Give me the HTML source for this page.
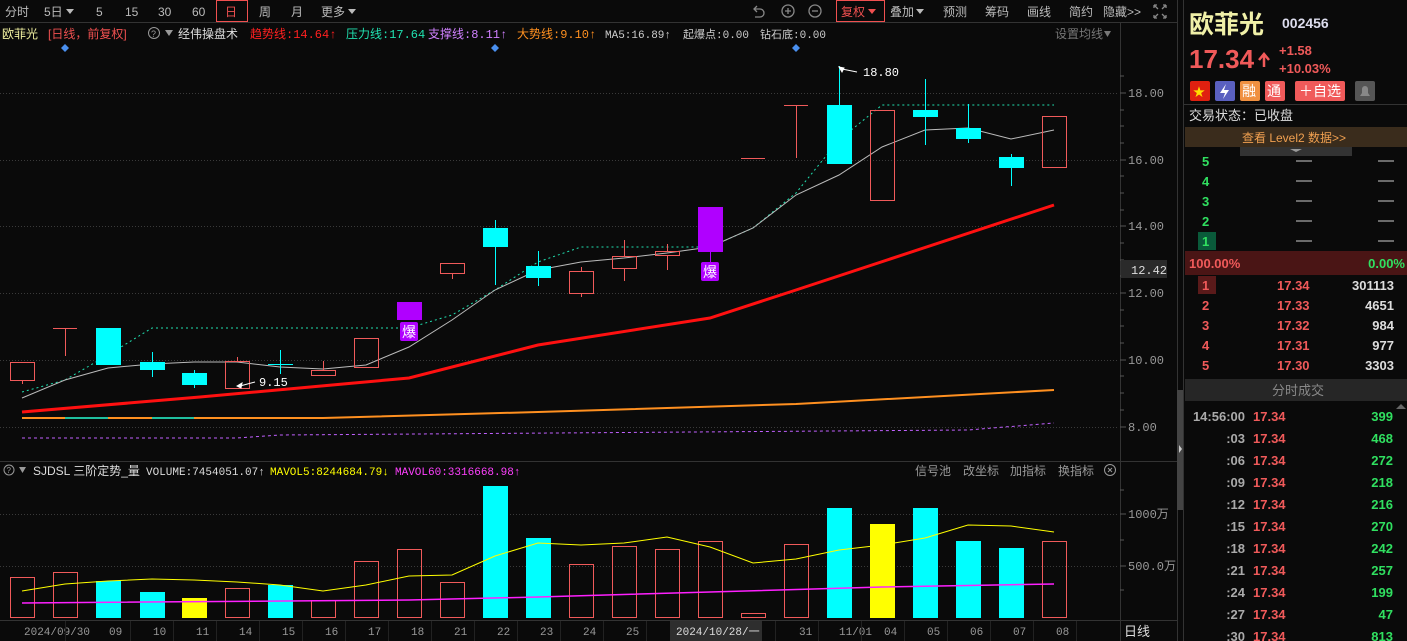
<!DOCTYPE html>
<html><head><meta charset="utf-8"><style>
html,body{margin:0;padding:0;background:#0a0a0a;width:1407px;height:641px;overflow:hidden}
svg{display:block;font-family:"Liberation Sans","Noto Sans CJK SC",sans-serif}
.m{font-family:"Liberation Mono","Noto Sans CJK SC",monospace}
</style></head><body>
<svg width="1407" height="641" xmlns="http://www.w3.org/2000/svg" font-size="12">
<rect width="1407" height="641" fill="#0a0a0a"/>
<line x1="0" y1="22.5" x2="1177" y2="22.5" stroke="#333"/>
<g fill="#bbb" font-size="12">
<text x="5" y="16">分时</text>
<text x="44" y="16">5日</text><path d="M66 9l8 0l-4 5z" fill="#bbb"/>
<text x="96" y="16">5</text><text x="125" y="16">15</text><text x="158" y="16">30</text><text x="192" y="16">60</text>
<text x="259" y="16">周</text><text x="291" y="16">月</text><text x="321" y="16">更多</text><path d="M348 9l8 0l-4 5z"/>
</g>
<rect x="216.5" y="0.5" width="31" height="21" fill="none" stroke="#f05050"/>
<text x="225" y="16" fill="#f05050">日</text>
<g stroke="#888" fill="none" stroke-width="1.3">
<path d="M757 6l-3 3l3 3M754 9h6a4 4 0 0 1 0 8h-5"/>
<circle cx="788" cy="11" r="6"/><path d="M785 11h6M788 8v6"/>
<circle cx="815" cy="11" r="6"/><path d="M812 11h6"/>
<path d="M1154 5l4 4M1154 5h3M1154 5v3M1166 5l-4 4M1166 5h-3M1166 5v3M1154 18l4-4M1154 18h3M1154 18v-3M1166 18l-4-4M1166 18h-3M1166 18v-3"/>
</g>
<rect x="836.5" y="0.5" width="48" height="21" fill="none" stroke="#f05050"/>
<text x="841" y="16" fill="#f05050">复权</text><path d="M868 9h8l-4 5z" fill="#f05050"/>
<g fill="#bbb"><text x="890" y="16">叠加</text><path d="M916 9h8l-4 5z"/>
<text x="943" y="16">预测</text><text x="985" y="16">筹码</text><text x="1027" y="16">画线</text><text x="1069" y="16">简约</text><text x="1103" y="16">隐藏&gt;&gt;</text></g>
<g font-size="12">
<text x="2" y="38" fill="#f0f0a0">欧菲光</text>
<text x="48" y="38" fill="#f05050">[日线，前复权]</text>
<circle cx="154" cy="33" r="5.5" fill="none" stroke="#999"/><text x="151" y="37" fill="#999" font-size="9">?</text>
<path d="M165 30h8l-4 6z" fill="#999"/>
<text x="178" y="38" fill="#ddd">经伟操盘术</text>
<text x="250" y="38" class="m" fill="#ff2020" font-size="12">趋势线:14.64↑</text>
<text x="346" y="38" class="m" fill="#20e0b0" font-size="12">压力线:17.64</text>
<text x="428" y="38" class="m" fill="#d080ff" font-size="12">支撑线:8.11↑</text>
<text x="517" y="38" class="m" fill="#ff9020" font-size="12">大势线:9.10↑</text>
<text x="605" y="38" class="m" fill="#ccc" font-size="11">MA5:16.89↑</text>
<text x="683" y="38" class="m" fill="#ccc" font-size="11">起爆点:0.00</text>
<text x="760" y="38" class="m" fill="#ccc" font-size="11">钻石底:0.00</text>
<text x="1055" y="38" fill="#777">设置均线</text><path d="M1104 31h7l-3.5 6z" fill="#777"/>
</g>
<g fill="#4a90f0"><path d="M65 44l4 4l-4 4l-4-4z"/><path d="M495 44l4 4l-4 4l-4-4z"/><path d="M796 44l4 4l-4 4l-4-4z"/></g>
<g stroke="#3a3a3a" stroke-dasharray="1 2">
<line x1="0" y1="93.5" x2="1118" y2="93.5"/><line x1="0" y1="160.5" x2="1118" y2="160.5"/><line x1="0" y1="226.5" x2="1118" y2="226.5"/><line x1="0" y1="293.5" x2="1118" y2="293.5"/><line x1="0" y1="360.5" x2="1118" y2="360.5"/><line x1="0" y1="427.5" x2="1118" y2="427.5"/>
<line x1="0" y1="514.5" x2="1118" y2="514.5"/><line x1="0" y1="566.5" x2="1118" y2="566.5"/>
</g>
<line x1="1120.5" y1="23" x2="1120.5" y2="641" stroke="#333"/>
<line x1="0" y1="461.5" x2="1177" y2="461.5" stroke="#333"/>
<line x1="0" y1="620.5" x2="1177" y2="620.5" stroke="#333"/>
<line x1="1177.5" y1="0" x2="1177.5" y2="641" stroke="#333"/>
<rect x="1177" y="390" width="6" height="120" fill="#444"/>
<path d="M1179 445l3 4l-3 4z" fill="#ccc"/>
<line x1="1183.5" y1="0" x2="1183.5" y2="641" stroke="#333"/>
<g fill="#999" class="m" font-size="12">
<text x="1128" y="97" class="m">18.00</text><text x="1128" y="164" class="m">16.00</text><text x="1128" y="230" class="m">14.00</text><text x="1128" y="297" class="m">12.00</text><text x="1128" y="364" class="m">10.00</text><text x="1128" y="431" class="m">8.00</text>
<text x="1128" y="518">1000万</text><text x="1128" y="570">500.0万</text>
</g>
<g stroke="#555"><path d="M1120 76h4M1120 110h4M1120 126h4M1120 143h4M1120 176h4M1120 193h4M1120 210h4M1120 243h4M1120 260h4M1120 276h4M1120 310h4M1120 326h4M1120 343h4M1120 376h4M1120 393h4M1120 410h4M1120 93h6M1120 160h6M1120 226h6M1120 293h6M1120 360h6M1120 427h6M1120 514h6M1120 566h6M1120 490h4M1120 540h4M1120 590h4"/></g>
<rect x="1121" y="260" width="46" height="18" fill="#2a2a2a"/>
<text x="1131" y="274" fill="#ddd" class="m" font-size="12">12.42</text>
<polyline fill="none" stroke="#ff9020" stroke-width="2" points="22,418 323,418 538,412 796,404 1054,390"/>
<polyline fill="none" stroke="#20c0a0" stroke-width="2" points="65,418 108,418"/>
<polyline fill="none" stroke="#20c0a0" stroke-width="2" points="152,418 194,418"/>
<polyline fill="none" stroke="#c060ff" stroke-dasharray="3 3" points="22,438 237,438 280,435 968,430 1054,423"/>
<polyline fill="none" stroke="#ff1010" stroke-width="3" points="22,412 200,397 409,378 538,345 710,318 796,290 1054,205"/>
<polyline fill="none" stroke="#20e0b0" stroke-dasharray="2 3" points="22,392 65,380 108,355 152,328 409,328 452,315 495,290 538,262 581,247 710,247 753,228 796,193 839,140 882,105 1054,105"/>
<polyline fill="none" stroke="#bbb" points="22,398 65,380 108,368 152,364 194,362 237,362 280,367 323,369 366,365 409,347 452,320 495,290 538,270 581,262 624,258 667,253 710,247 753,228 796,195 839,175 882,147 925,130 968,128 1011,139 1054,130"/>
<g stroke="#f05a5a" fill="none">
<rect x="10.5" y="362.5" width="24" height="18"/><path d="M22.5 380v4"/>
<path d="M53 328.5h24M65.5 328v28"/>
<rect x="225.5" y="361.5" width="24" height="27"/><path d="M237.5 357v4"/>
<rect x="311.5" y="370.5" width="24" height="5"/><path d="M323.5 361v9"/>
<rect x="354.5" y="338.5" width="24" height="29"/>
<rect x="440.5" y="263.5" width="24" height="10"/><path d="M452.5 273v6"/>
<rect x="569.5" y="271.5" width="24" height="22"/><path d="M581.5 267v4M581.5 293v4"/>
<rect x="612.5" y="256.5" width="24" height="12"/><path d="M624.5 240v16M624.5 268v13"/>
<rect x="655.5" y="251.5" width="24" height="4"/><path d="M667.5 244v7M667.5 255v15"/>
<path d="M741 158.5h24"/>
<path d="M784 105.5h24M796.5 105v53"/>
<rect x="870.5" y="110.5" width="24" height="90"/>
<rect x="1042.5" y="116.5" width="24" height="51"/>
</g>
<g fill="#00ffff" stroke="#00ffff">
<rect x="96" y="328" width="25" height="37" stroke="none"/>
<rect x="140" y="362" width="25" height="8" stroke="none"/><path d="M152.5 352v25"/>
<rect x="182" y="373" width="25" height="12" stroke="none"/><path d="M194.5 370v18"/>
<path d="M268 364.5h25M280.5 350v24"/>
<rect x="483" y="228" width="25" height="19" stroke="none"/><path d="M495.5 220v65"/>
<rect x="526" y="266" width="25" height="12" stroke="none"/><path d="M538.5 251v35"/>
<rect x="827" y="105" width="25" height="59" stroke="none"/><path d="M839.5 66v39"/>
<rect x="913" y="110" width="25" height="7" stroke="none"/><path d="M925.5 79v66"/>
<rect x="956" y="128" width="25" height="11" stroke="none"/><path d="M968.5 104v39"/>
<rect x="999" y="157" width="25" height="11" stroke="none"/><path d="M1011.5 154v32"/>
</g>
<g fill="#b000ff">
<rect x="397" y="302" width="25" height="18"/>
<rect x="698" y="207" width="25" height="45"/>
<rect x="400" y="322" width="18" height="19" rx="2"/>
<rect x="701" y="262" width="18" height="19" rx="2"/>
</g>
<line x1="710.5" y1="252" x2="710.5" y2="262" stroke="#b000ff"/>
<text x="402" y="337" fill="#fff" font-size="14">爆</text>
<text x="703" y="277" fill="#fff" font-size="14">爆</text>
<g fill="#fff" stroke="#fff"><path d="M237 386l5-3l-1 5z"/><path d="M240 386l15-4" fill="none"/>
<path d="M839 67l5 1l-2 4z"/><path d="M842 69l15 3" fill="none"/></g>
<text x="259" y="386" fill="#fff" class="m" font-size="12">9.15</text>
<text x="863" y="76" fill="#fff" class="m" font-size="12">18.80</text>
<circle cx="9" cy="470" r="5" fill="none" stroke="#999"/><text x="6.5" y="473" fill="#999" font-size="8">?</text>
<path d="M19 467h7l-3.5 6z" fill="#999"/>
<text x="33" y="475" fill="#ddd" font-size="12">SJDSL 三阶定势_量</text>
<text x="146" y="475" fill="#ddd" class="m" font-size="11">VOLUME:7454051.07↑</text>
<text x="270" y="475" fill="#ffff00" class="m" font-size="11">MAVOL5:8244684.79↓</text>
<text x="395" y="475" fill="#ff40ff" class="m" font-size="11">MAVOL60:3316668.98↑</text>
<g fill="#999" font-size="12"><text x="915" y="475">信号池</text><text x="963" y="475">改坐标</text><text x="1010" y="475">加指标</text><text x="1058" y="475">换指标</text></g>
<circle cx="1110" cy="470" r="5.5" fill="none" stroke="#999"/><path d="M1108 468l4 4M1112 468l-4 4" stroke="#999"/>
<g stroke="#f05a5a" fill="none">
<rect x="10.5" y="577.5" width="24" height="40"/><rect x="53.5" y="572.5" width="24" height="45"/>
<rect x="225.5" y="588.5" width="24" height="29"/><rect x="311.5" y="600.5" width="24" height="17"/>
<rect x="354.5" y="561.5" width="24" height="56"/><rect x="397.5" y="549.5" width="24" height="68"/>
<rect x="440.5" y="582.5" width="24" height="35"/><rect x="569.5" y="564.5" width="24" height="53"/>
<rect x="612.5" y="546.5" width="24" height="71"/><rect x="655.5" y="549.5" width="24" height="68"/>
<rect x="698.5" y="541.5" width="24" height="76"/><rect x="741.5" y="613.5" width="24" height="4"/>
<rect x="784.5" y="544.5" width="24" height="73"/><rect x="1042.5" y="541.5" width="24" height="76"/>
</g>
<g fill="#00ffff">
<rect x="96" y="581" width="25" height="37"/><rect x="140" y="592" width="25" height="26"/>
<rect x="268" y="585" width="25" height="33"/><rect x="483" y="486" width="25" height="132"/>
<rect x="526" y="538" width="25" height="80"/><rect x="827" y="508" width="25" height="110"/>
<rect x="913" y="508" width="25" height="110"/><rect x="956" y="541" width="25" height="77"/>
<rect x="999" y="548" width="25" height="70"/>
</g>
<g fill="#ffff00"><rect x="182" y="598" width="25" height="20"/><rect x="870" y="524" width="25" height="94"/></g>
<polyline fill="none" stroke="#ffff00" points="22,591 65,584 108,581 152,579 194,580 237,582 280,585 323,591 366,585 409,576 452,575 495,556 538,543 581,545 624,543 667,537 710,547 753,563 796,559 839,550 882,545 925,538 968,525 1011,526 1054,532"/>
<polyline fill="none" stroke="#ff20ff" stroke-width="1.5" points="22,603 409,600 538,597 710,592 882,587 1054,584"/>
<g fill="#999" font-size="11" class="m">
<text x="24" y="635">2024/09/30</text><text x="109" y="635">09</text><text x="153" y="635">10</text><text x="196" y="635">11</text><text x="239" y="635">14</text><text x="282" y="635">15</text><text x="325" y="635">16</text><text x="368" y="635">17</text><text x="411" y="635">18</text><text x="454" y="635">21</text><text x="497" y="635">22</text><text x="540" y="635">23</text><text x="583" y="635">24</text><text x="626" y="635">25</text><text x="799" y="635">31</text><text x="839" y="635">11/01</text><text x="884" y="635">04</text><text x="927" y="635">05</text><text x="970" y="635">06</text><text x="1013" y="635">07</text><text x="1056" y="635">08</text>
</g>
<rect x="670" y="621" width="92" height="20" fill="#2e2e2e"/>
<text x="676" y="635" fill="#ddd" font-size="11" class="m">2024/10/28/一</text>
<text x="1124" y="636" fill="#ddd" font-size="13">日线</text>
<g stroke="#222"><path d="M65.5 621v20M130.5 621v20M173.5 621v20M216.5 621v20M259.5 621v20M302.5 621v20M345.5 621v20M388.5 621v20M431.5 621v20M474.5 621v20M517.5 621v20M560.5 621v20M603.5 621v20M646.5 621v20M775.5 621v20M818.5 621v20M861.5 621v20M904.5 621v20M947.5 621v20M990.5 621v20M1033.5 621v20M1076.5 621v20"/></g>
<text x="1189" y="33" fill="#f0f0a8" font-size="25" font-weight="bold">欧菲光</text>
<text x="1282" y="28" fill="#dde" font-size="14" font-weight="bold">002456</text>
<text x="1189" y="68" fill="#f05a5a" font-size="26" font-weight="bold">17.34</text>
<path d="M1264 67v-12M1259 60l5-6l5 6" stroke="#f05a5a" stroke-width="2.5" fill="none"/>
<text x="1279" y="55" fill="#f05a5a" font-size="13" font-weight="bold">+1.58</text>
<text x="1279" y="73" fill="#f05a5a" font-size="13" font-weight="bold">+10.03%</text>
<rect x="1190" y="81" width="20" height="20" rx="2" fill="#e02010"/><text x="1193" y="96" fill="#ffdd00" font-size="12">★</text>
<rect x="1215" y="81" width="20" height="20" rx="2" fill="#5a60c0"/><path d="M1226 84l-6 9h5l-2 6l6-9h-5z" fill="#fff"/>
<rect x="1240" y="81" width="20" height="20" rx="2" fill="#f09040"/><text x="1242" y="96" fill="#fff" font-size="14">融</text>
<rect x="1265" y="81" width="20" height="20" rx="2" fill="#f05a5a"/><text x="1267" y="96" fill="#fff" font-size="14">通</text>
<rect x="1295" y="81" width="50" height="20" rx="2" fill="#f05a5a"/><text x="1299" y="96" fill="#fff" font-size="14">＋自选</text>
<rect x="1355" y="81" width="20" height="20" rx="2" fill="#555"/><path d="M1360 96h10l-2-3v-4a3 3 0 0 0-6 0v4z" fill="#888"/>
<line x1="1184" y1="104.5" x2="1407" y2="104.5" stroke="#333"/>
<text x="1189" y="120" fill="#ddd" font-size="13">交易状态：已收盘</text>
<rect x="1185" y="127" width="222" height="20" fill="#3a2c1c"/>
<text x="1242" y="142" fill="#f0a050" font-size="12">查看 Level2 数据&gt;&gt;</text>
<rect x="1240" y="147" width="112" height="9" fill="#333"/><path d="M1290 149h12l-6 3z" fill="#999"/>
<g fill="#30e060" font-size="13" font-weight="bold">
<text x="1202" y="166">5</text><text x="1202" y="186">4</text><text x="1202" y="206">3</text><text x="1202" y="226">2</text></g>
<rect x="1198" y="232" width="18" height="18" fill="#0a5a3a"/><text x="1202" y="246" fill="#30e060" font-size="13" font-weight="bold">1</text>
<g stroke="#ccc"><path d="M1296 161h16M1378 161h16M1296 181h16M1378 181h16M1296 201h16M1378 201h16M1296 221h16M1378 221h16M1296 241h16M1378 241h16"/></g>
<rect x="1185" y="251" width="222" height="24" fill="#4a1515"/>
<text x="1189" y="268" fill="#f05a5a" font-size="13" font-weight="bold">100.00%</text>
<text x="1405" y="268" fill="#30e060" font-size="13" font-weight="bold" text-anchor="end">0.00%</text>
<rect x="1198" y="276" width="18" height="18" fill="#5a1a1a"/>
<g fill="#f05a5a" font-size="13" font-weight="bold">
<text x="1202" y="290">1</text><text x="1202" y="310">2</text><text x="1202" y="330">3</text><text x="1202" y="350">4</text><text x="1202" y="370">5</text>
<text x="1277" y="290">17.34</text><text x="1277" y="310">17.33</text><text x="1277" y="330">17.32</text><text x="1277" y="350">17.31</text><text x="1277" y="370">17.30</text></g>
<g fill="#ddd" font-size="13" font-weight="bold" text-anchor="end">
<text x="1394" y="290">301113</text><text x="1394" y="310">4651</text><text x="1394" y="330">984</text><text x="1394" y="350">977</text><text x="1394" y="370">3303</text></g>
<rect x="1185" y="379" width="222" height="22" fill="#262626"/>
<text x="1272" y="395" fill="#888" font-size="13">分时成交</text>
<path d="M1396 409l5-5l5 5z" fill="#666"/>
<g font-size="13" font-weight="bold">
<g fill="#aaa" text-anchor="end"><text x="1245" y="421">14:56:00</text><text x="1245" y="443">:03</text><text x="1245" y="465">:06</text><text x="1245" y="487">:09</text><text x="1245" y="509">:12</text><text x="1245" y="531">:15</text><text x="1245" y="553">:18</text><text x="1245" y="575">:21</text><text x="1245" y="597">:24</text><text x="1245" y="619">:27</text><text x="1245" y="641">:30</text></g>
<g fill="#f05a5a"><text x="1253" y="421">17.34</text><text x="1253" y="443">17.34</text><text x="1253" y="465">17.34</text><text x="1253" y="487">17.34</text><text x="1253" y="509">17.34</text><text x="1253" y="531">17.34</text><text x="1253" y="553">17.34</text><text x="1253" y="575">17.34</text><text x="1253" y="597">17.34</text><text x="1253" y="619">17.34</text><text x="1253" y="641">17.34</text></g>
<g fill="#30e060" text-anchor="end"><text x="1393" y="421">399</text><text x="1393" y="443">468</text><text x="1393" y="465">272</text><text x="1393" y="487">218</text><text x="1393" y="509">216</text><text x="1393" y="531">270</text><text x="1393" y="553">242</text><text x="1393" y="575">257</text><text x="1393" y="597">199</text><text x="1393" y="619">47</text><text x="1393" y="641">813</text></g>
</g>
</svg>
</body></html>
